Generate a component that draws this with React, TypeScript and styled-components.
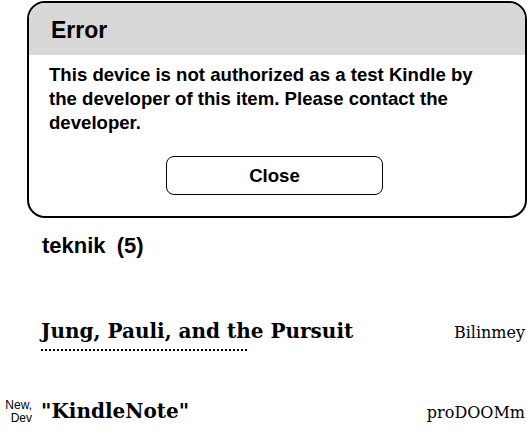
import React from "react";
import styled, { createGlobalStyle } from "styled-components";

const GlobalStyle = createGlobalStyle`
  html, body {
    margin: 0;
    padding: 0;
    background: #fff;
    color: #000;
  }
  body {
    width: 527px;
    height: 445px;
    overflow: hidden;
  }
`;

const sans = `"Liberation Sans", Arial, Helvetica, sans-serif`;
const serif = `"DejaVu Serif", "Liberation Serif", serif`;

const Page = styled.div`
  display: flex;
  flex-direction: column;
  width: 527px;
`;

const Dialog = styled.div`
  box-sizing: border-box;
  margin: 1px 0 0 27px;
  width: 500px;
  height: 217px;
  border: 2px solid #000;
  border-radius: 18px;
  overflow: hidden;
  display: flex;
  flex-direction: column;
  font-family: ${sans};
  font-weight: bold;
`;

const DialogHeader = styled.div`
  height: 52px;
  background: #d8d8d8;
  display: flex;
  align-items: center;
  padding: 2px 22px 0;
  box-sizing: border-box;
  font-size: 23px;
`;

const DialogBody = styled.div`
  padding: 8px 36px 0 20px;
  font-size: 18.6px;
  line-height: 24px;
`;

const ButtonRow = styled.div`
  display: flex;
  justify-content: center;
  margin-top: 21px;
`;

const CloseButton = styled.button`
  box-sizing: border-box;
  width: 217px;
  height: 39px;
  border: 1.5px solid #000;
  border-radius: 8px;
  background: #fff;
  font-family: ${sans};
  font-weight: bold;
  font-size: 18.6px;
  color: #000;
  margin-right: 5px;
`;

const Category = styled.div`
  margin: 15px 0 0 42px;
  font-family: ${sans};
  font-weight: bold;
  font-size: 22px;
  word-spacing: 5px;
`;

const BookRow = styled.div<{ $top: number }>`
  display: flex;
  align-items: baseline;
  margin-top: ${({ $top }) => $top}px;
  white-space: nowrap;
  overflow: hidden;
`;

const Badge = styled.div`
  width: 41px;
  flex: none;
  align-self: center;
  font-family: ${sans};
  font-size: 12px;
  line-height: 13px;
  text-align: right;
  padding-right: 9px;
  box-sizing: border-box;
`;

const TitleCell = styled.div`
  flex: 1;
  display: flex;
  flex-direction: column;
  align-items: flex-start;
`;

const Title = styled.div`
  font-family: ${serif};
  font-weight: bold;
  font-size: 20px;
`;

const Progress = styled.div<{ $w: number }>`
  width: ${({ $w }) => $w}px;
  margin-top: 6px;
  border-top: 2px dotted #000;
`;

const Author = styled.div`
  font-family: ${serif};
  font-size: 16px;
  padding-right: 2px;
`;

export default function App() {
  return (
    <>
      <GlobalStyle />
      <Page>
        <Dialog>
          <DialogHeader>Error</DialogHeader>
          <DialogBody>
            This device is not authorized as a test Kindle by the developer of
            this item. Please contact the developer.
          </DialogBody>
          <ButtonRow>
            <CloseButton>Close</CloseButton>
          </ButtonRow>
        </Dialog>
        <Category>teknik (5)</Category>
        <BookRow $top={60}>
          <Badge />
          <TitleCell>
            <Title>Jung, Pauli, and the Pursuit</Title>
            <Progress $w={206} />
          </TitleCell>
          <Author>Bilinmey</Author>
        </BookRow>
        <BookRow $top={48}>
          <Badge>
            New,
            <br />
            Dev
          </Badge>
          <TitleCell>
            <Title>"KindleNote"</Title>
          </TitleCell>
          <Author>proDOOMm</Author>
        </BookRow>
      </Page>
    </>
  );
}
